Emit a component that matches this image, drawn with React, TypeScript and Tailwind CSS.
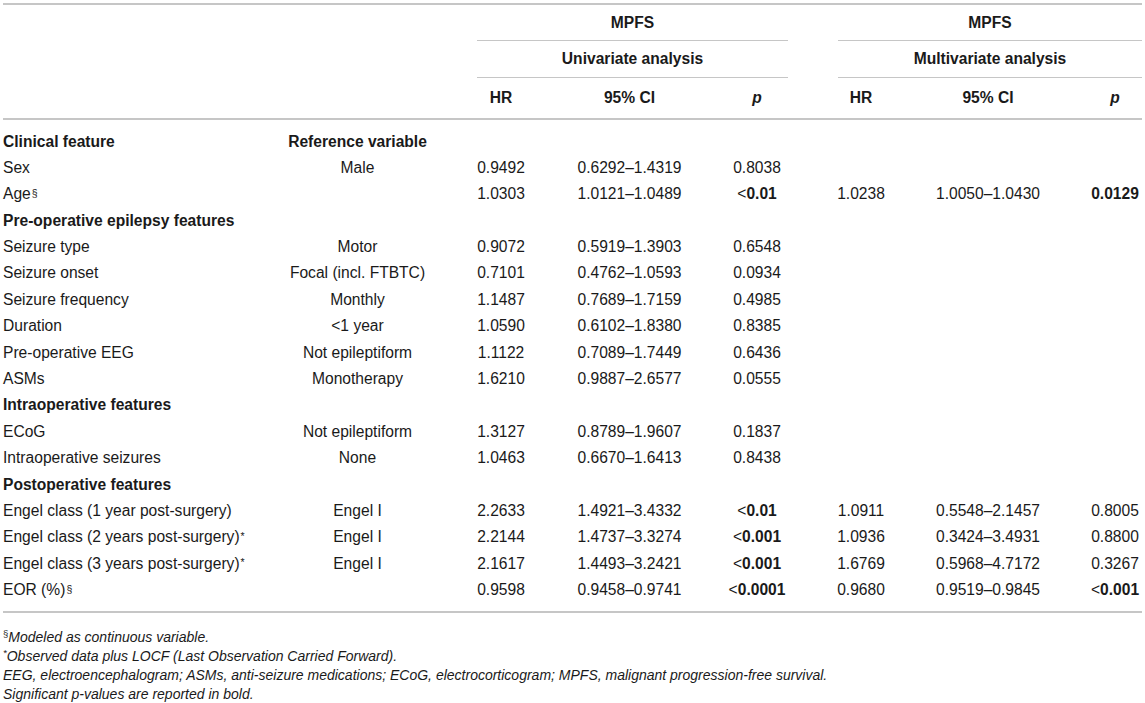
import React from 'react';

type Cell = { v?: string; b?: boolean };

interface DataRow {
  label: string;
  sup?: string;
  heading?: boolean;
  ref?: string;
  uni?: [string, string, string, boolean?];
  multi?: [string, string, string, boolean?];
}

const GRID =
  'grid grid-cols-[272px_165px_37px_48px_209px_46px_8px_50px_46px_208px_46px_4px]';

const rows: DataRow[] = [
  { label: 'Clinical feature', heading: true, ref: 'Reference variable' },
  { label: 'Sex', ref: 'Male', uni: ['0.9492', '0.6292–1.4319', '0.8038'] },
  {
    label: 'Age',
    sup: '§',
    uni: ['1.0303', '1.0121–1.0489', '<0.01', true],
    multi: ['1.0238', '1.0050–1.0430', '0.0129', true],
  },
  { label: 'Pre-operative epilepsy features', heading: true },
  { label: 'Seizure type', ref: 'Motor', uni: ['0.9072', '0.5919–1.3903', '0.6548'] },
  { label: 'Seizure onset', ref: 'Focal (incl. FTBTC)', uni: ['0.7101', '0.4762–1.0593', '0.0934'] },
  { label: 'Seizure frequency', ref: 'Monthly', uni: ['1.1487', '0.7689–1.7159', '0.4985'] },
  { label: 'Duration', ref: '<1 year', uni: ['1.0590', '0.6102–1.8380', '0.8385'] },
  { label: 'Pre-operative EEG', ref: 'Not epileptiform', uni: ['1.1122', '0.7089–1.7449', '0.6436'] },
  { label: 'ASMs', ref: 'Monotherapy', uni: ['1.6210', '0.9887–2.6577', '0.0555'] },
  { label: 'Intraoperative features', heading: true },
  { label: 'ECoG', ref: 'Not epileptiform', uni: ['1.3127', '0.8789–1.9607', '0.1837'] },
  { label: 'Intraoperative seizures', ref: 'None', uni: ['1.0463', '0.6670–1.6413', '0.8438'] },
  { label: 'Postoperative features', heading: true },
  {
    label: 'Engel class (1 year post-surgery)',
    ref: 'Engel I',
    uni: ['2.2633', '1.4921–3.4332', '<0.01', true],
    multi: ['1.0911', '0.5548–2.1457', '0.8005'],
  },
  {
    label: 'Engel class (2 years post-surgery)',
    sup: '*',
    ref: 'Engel I',
    uni: ['2.2144', '1.4737–3.3274', '<0.001', true],
    multi: ['1.0936', '0.3424–3.4931', '0.8800'],
  },
  {
    label: 'Engel class (3 years post-surgery)',
    sup: '*',
    ref: 'Engel I',
    uni: ['2.1617', '1.4493–3.2421', '<0.001', true],
    multi: ['1.6769', '0.5968–4.7172', '0.3267'],
  },
  {
    label: 'EOR (%)',
    sup: '§',
    uni: ['0.9598', '0.9458–0.9741', '<0.0001', true],
    multi: ['0.9680', '0.9519–0.9845', '<0.001', true],
  },
];

// "<" stays regular weight even when the value is bold
function PValue({ v, b }: Cell) {
  if (!v) return null;
  if (!b) return <>{v}</>;
  if (v.startsWith('<')) {
    return (
      <>
        <span className="font-normal">&lt;</span>
        <span className="font-bold">{v.slice(1)}</span>
      </>
    );
  }
  return <span className="font-bold">{v}</span>;
}

function Num({ children }: { children?: React.ReactNode }) {
  return <div className="flex items-center justify-center whitespace-nowrap">{children}</div>;
}

function BodyRow({ row }: { row: DataRow }) {
  const [uHr, uCi, uP, uB] = row.uni ?? [];
  const [mHr, mCi, mP, mB] = row.multi ?? [];
  return (
    <div className={`${GRID} h-[26.4px]`}>
      <div className={`flex items-center whitespace-nowrap ${row.heading ? 'font-bold' : ''}`}>
        {row.label}
        {row.sup && <sup className="text-[10.5px] relative -top-[1px] ml-[1px]">{row.sup}</sup>}
      </div>
      <div className={`flex items-center justify-center whitespace-nowrap ${row.heading ? 'font-bold' : ''}`}>
        {row.ref}
      </div>
      <div />
      <Num>{uHr}</Num>
      <Num>{uCi}</Num>
      <Num>
        <PValue v={uP} b={uB} />
      </Num>
      <div />
      <div />
      <Num>{mHr}</Num>
      <Num>{mCi}</Num>
      <Num>
        <PValue v={mP} b={mB} />
      </Num>
      <div />
    </div>
  );
}

export default function App() {
  return (
    <div className="w-[1145px] h-[703px] bg-white overflow-hidden pt-[3px] text-[#1a1a1a] font-['Liberation_Sans',Arial,sans-serif]">
      <div className="ml-[3px] w-[1139px] text-[15.6px]">
        {/* header */}
        <div className="border-t-2 border-[#c6c6c6]">
          <div className={`${GRID} h-[36px] font-bold`}>
            <div className="col-span-3" />
            <div className="col-span-4 flex items-center justify-center border-b border-[#c6c6c6]">MPFS</div>
            <div />
            <div className="col-span-4 flex items-center justify-center border-b border-[#c6c6c6]">MPFS</div>
          </div>
          <div className={`${GRID} h-[37px] font-bold`}>
            <div className="col-span-3" />
            <div className="col-span-4 flex items-center justify-center border-b border-[#c6c6c6]">
              Univariate analysis
            </div>
            <div />
            <div className="col-span-4 flex items-center justify-center border-b border-[#c6c6c6]">
              Multivariate analysis
            </div>
          </div>
          <div className={`${GRID} h-[42px] font-bold border-b-2 border-[#c6c6c6]`}>
            <div className="col-span-3" />
            <Num>HR</Num>
            <Num>95% CI</Num>
            <Num>
              <i>p</i>
            </Num>
            <div />
            <div />
            <Num>HR</Num>
            <Num>95% CI</Num>
            <Num>
              <i>p</i>
            </Num>
            <div />
          </div>
        </div>

        {/* body */}
        <div className="pt-[8px] pb-[8px] border-b-2 border-[#c6c6c6]">
          {rows.map(r => (
            <BodyRow key={r.label} row={r} />
          ))}
        </div>

        {/* footnotes */}
        <div className="pt-[15px] italic text-[14px] leading-[19px]">
          <p>
            <sup className="text-[9.5px] not-italic">§</sup>Modeled as continuous variable.
          </p>
          <p>
            <sup className="text-[9.5px]">*</sup>Observed data plus LOCF (Last Observation Carried Forward).
          </p>
          <p>
            EEG, electroencephalogram; ASMs, anti-seizure medications; ECoG, electrocorticogram; MPFS,
            malignant progression-free survival.
          </p>
          <p>Significant p-values are reported in bold.</p>
        </div>
      </div>
    </div>
  );
}
